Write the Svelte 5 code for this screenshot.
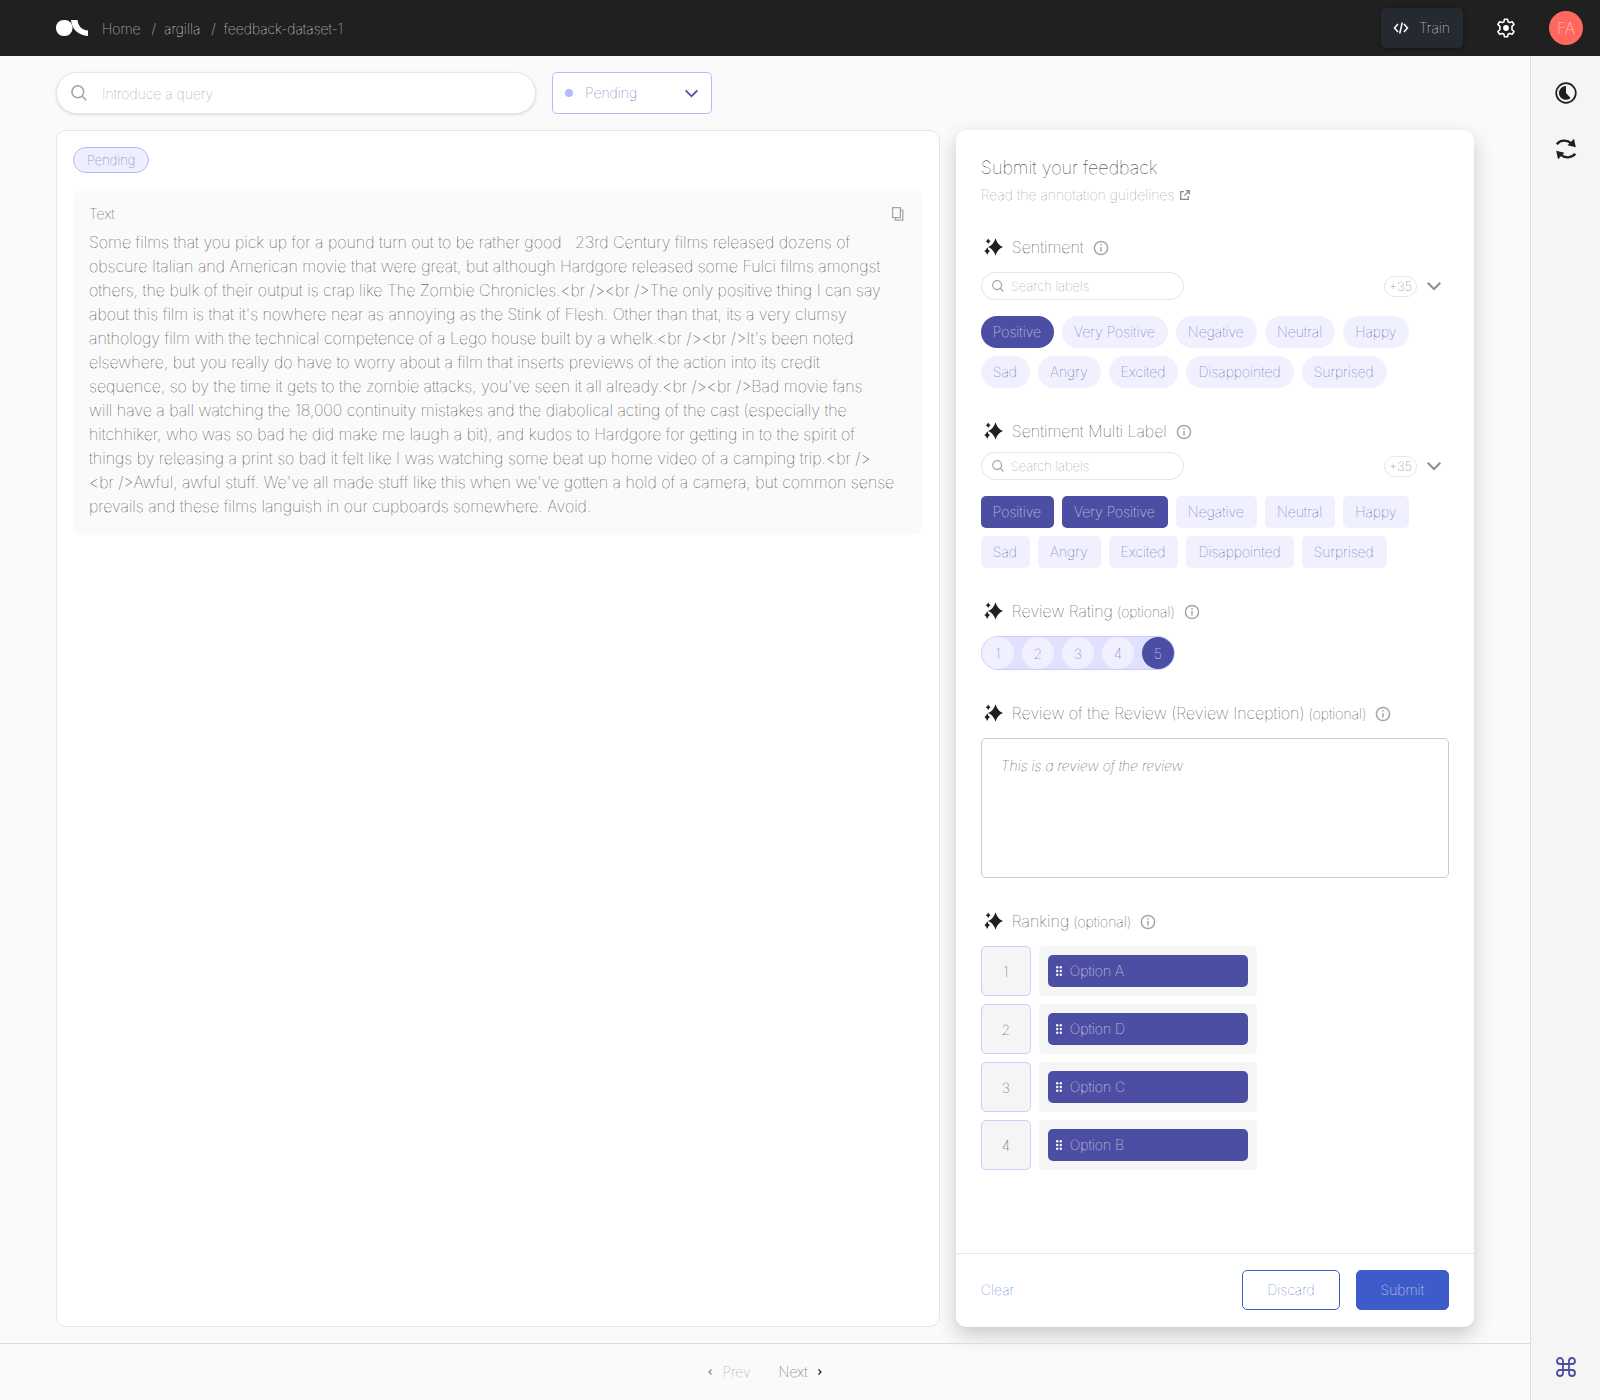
<script>
  const text =
    "Some films that you pick up for a pound turn out to be rather good \u00a0 23rd Century films released dozens of obscure Italian and American movie that were great, but although Hardgore released some Fulci films amongst others, the bulk of their output is crap like The Zombie Chronicles.<br /><br />The only positive thing I can say about this film is that it's nowhere near as annoying as the Stink of Flesh. Other than that, its a very clumsy anthology film with the technical competence of a Lego house built by a whelk.<br /><br />It's been noted elsewhere, but you really do have to worry about a film that inserts previews of the action into its credit\nsequence, so by the time it gets to the zombie attacks, you've seen it all already.<br /><br />Bad movie fans\nwill have a ball watching the 18,000 continuity mistakes and the diabolical acting of the cast (especially the hitchhiker, who was so bad he did make me laugh a bit), and kudos to Hardgore for getting in to the spirit of things by releasing a print so bad it felt like I was watching some beat up home video of a camping trip.<br />\n<br />Awful, awful stuff. We've all made stuff like this when we've gotten a hold of a camera, but common sense prevails and these films languish in our cupboards somewhere. Avoid.";
  const labels = ['Positive', 'Very Positive', 'Negative', 'Neutral', 'Happy', 'Sad', 'Angry', 'Excited', 'Disappointed', 'Surprised'];
  const ranking = ['Option A', 'Option D', 'Option C', 'Option B'];
  let single = $state('Positive');
  let multi = $state(['Positive', 'Very Positive']);
  let rating = $state(5);
  let review = $state('This is a review of the review');
</script>

{#snippet searchIcon(size)}
  <svg width={size} height={size} viewBox="0 0 16 16" fill="none" stroke="#a6a6a6" stroke-width="1.6" aria-hidden="true">
    <circle cx="6.8" cy="6.8" r="5.9" /><path d="M11 11l4.3 4.3" />
  </svg>
{/snippet}

{#snippet chevron(size, color)}
  <svg width={size} height={size} viewBox="0 0 12 12" fill="none" stroke={color} stroke-width="1.7" aria-hidden="true">
    <path d="M.6 3.2L6 8.6l5.4-5.4" />
  </svg>
{/snippet}

{#snippet heading(title, optional)}
  <h3>
    <svg class="spark" width="20" height="18" viewBox="0 0 20 18" fill="#202020" aria-hidden="true">
      <path d="M11.500 .2Q13.500 7 19 9 13.500 11 11.500 17.800 9.500 11 4 9 9.500 7 11.500 .2z" />
      <path d="M4.200 .4Q5 2.500 6.700 3.200 5 3.900 4.200 6 3.400 3.900 1.700 3.200 3.400 2.500 4.200 .4z" />
      <path d="M3.200 9.200Q4.100 12.100 6 13 4.100 13.900 3.200 16.900 2.300 13.900 .3 13 2.300 12.100 3.200 9.200z" />
    </svg>
    <span>{title}{#if optional}<small>(optional)</small>{/if}</span>
    <svg class="info" width="16" height="16" viewBox="0 0 16 16" fill="none" stroke="#a6a6a6" stroke-width="1.5" role="img" aria-label="Info">
      <circle cx="8" cy="8" r="6.6" /><path d="M8 7v4.600M8 4v1.600" />
    </svg>
  </h3>
{/snippet}

{#snippet labelTools(name)}
  <div class="tools">
    <label class="labelsearch">
      {@render searchIcon(12)}
      <input type="text" placeholder="Search labels" aria-label="Search {name} labels" />
    </label>
    <button class="count" type="button">+35</button>
    <button class="more" type="button" aria-label="Show more labels">{@render chevron(14, '#8f8f8f')}</button>
  </div>
{/snippet}

<div class="app">
  <header>
    <a class="logo" href="/" aria-label="Argilla">
      <svg width="32" height="16" viewBox="0 0 32 16" fill="#fff" aria-hidden="true">
        <rect width="16.5" height="16" rx="7.6" />
        <path d="M15 0h6.600c.2 5.700 4.300 9.800 10.400 10.600V16C22.500 15.500 15.600 9 15 0z" />
      </svg>
    </a>
    <nav class="crumbs" aria-label="Breadcrumb">
      <a href="/">Home</a><i>/</i><a href="/argilla">argilla</a><i>/</i><a href="/dataset">feedback-dataset-1</a>
    </nav>
    <button class="train" type="button">
      <svg width="16" height="16" viewBox="0 0 16 16" fill="none" stroke="#fff" stroke-width="1.5" aria-hidden="true">
        <path d="M5 4L1.500 8 5 12M11 4l3.500 4-3.500 4M9.300 2.500L6.700 13.500" />
      </svg>
      Train
    </button>
    <a class="gear" href="/settings" aria-label="Settings">
      <svg width="20" height="20" viewBox="0 0 20 20" fill="none" stroke="#fff" stroke-width="1.6" stroke-linejoin="round" aria-hidden="true">
        <path d="M8.500 1.200h3l.6 2.500 1.500.9 2.700-.8 1.700 2.700-2 1.800v3.400l2 1.800-1.700 2.700-2.700-.8-1.500.9-.6 2.500h-3l-.6-2.500-1.500-.9-2.700.8L1.900 13.500l2-1.800V8.300l-2-1.800 1.700-2.700 2.700.8 1.600-.9z" />
        <circle cx="10" cy="10" r="2.9" fill="#fff" stroke="none" />
      </svg>
    </a>
    <button class="avatar" type="button">FA</button>
  </header>

  <div class="body">
    <div class="content">
      <main>
        <div class="filters">
          <label class="query">
            {@render searchIcon(16)}
            <input type="text" placeholder="Introduce a query" aria-label="Query" />
          </label>
          <label class="status">
            <b></b>
            <select aria-label="Record status">
              <option>Pending</option>
              <option>Submitted</option>
              <option>Discarded</option>
            </select>
            {@render chevron(13, '#4c4ea3')}
          </label>
        </div>
        <div class="panels">
          <section class="record">
            <span class="badge">Pending</span>
            <article>
              <div class="fieldhead">
                <h2>Text</h2>
                <button type="button" aria-label="Copy">
                  <svg width="14" height="16" viewBox="0 0 14 16" fill="none" stroke="#a6a6a6" stroke-width="1.3" aria-hidden="true">
                    <path d="M1.600 1.600h7.800v10H1.600z" /><path d="M9.400 4.400h2.400v9.800H4.400v-2.600" />
                  </svg>
                </button>
              </div>
              <p>{text}</p>
            </article>
          </section>

          <form class="feedback" onsubmit={(e) => e.preventDefault()}>
            <div class="questions">
              <div class="intro">
                <h2>Submit your feedback</h2>
                <a href="/guidelines">Read the annotation guidelines
                  <svg width="10" height="10" viewBox="0 0 10 10" fill="none" stroke="#8a8a8a" stroke-width="1.3" aria-hidden="true">
                    <path d="M4 1.700H.7v7.600h7.600V6M5.600.7h3.700v3.700M9.300.7L4.400 5.600" />
                  </svg>
                </a>
              </div>

              <div class="question roomy">
                {@render heading('Sentiment', false)}
                {@render labelTools('sentiment')}
                <div class="chips round">
                  {#each labels as l}
                    <label class:on={single === l}><input type="radio" name="sentiment" value={l} bind:group={single} />{l}</label>
                  {/each}
                </div>
              </div>

              <div class="question">
                {@render heading('Sentiment Multi Label', false)}
                {@render labelTools('multi')}
                <div class="chips">
                  {#each labels as l}
                    <label class:on={multi.includes(l)}><input type="checkbox" value={l} bind:group={multi} />{l}</label>
                  {/each}
                </div>
              </div>

              <div class="question roomy">
                {@render heading('Review Rating', true)}
                <div class="rating">
                  {#each [1, 2, 3, 4, 5] as n}
                    <label class:on={rating === n}><input type="radio" name="rating" value={n} bind:group={rating} />{n}</label>
                  {/each}
                </div>
              </div>

              <div class="question roomy">
                {@render heading('Review of the Review (Review Inception)', true)}
                <textarea aria-label="Review of the Review" bind:value={review}></textarea>
              </div>

              <div class="question roomy">
                {@render heading('Ranking', true)}
                <ol>
                  {#each ranking as option, i}
                    <li>
                      <span class="rank">{i + 1}</span>
                      <div class="slot">
                        <button type="button">
                          <svg width="6" height="10" viewBox="0 0 6 10" fill="#fff" aria-hidden="true">
                            <circle cx="1.2" cy="1.2" r="1.2" /><circle cx="4.8" cy="1.2" r="1.2" />
                            <circle cx="1.2" cy="5" r="1.2" /><circle cx="4.8" cy="5" r="1.2" />
                            <circle cx="1.2" cy="8.8" r="1.2" /><circle cx="4.8" cy="8.8" r="1.2" />
                          </svg>
                          {option}
                        </button>
                      </div>
                    </li>
                  {/each}
                </ol>
              </div>
            </div>
            <div class="actions">
              <button class="clear" type="button">Clear</button>
              <button class="discard" type="button">Discard</button>
              <button class="submit" type="submit">Submit</button>
            </div>
          </form>
        </div>
      </main>
      <footer>
        <button class="prev" type="button">
          <svg width="4" height="6" viewBox="0 0 4 6" fill="none" stroke="#8a8a8a" stroke-width="1.2" aria-hidden="true"><path d="M3.500.5L1 3l2.500 2.500" /></svg>
          Prev
        </button>
        <button type="button">
          Next
          <svg width="4" height="6" viewBox="0 0 4 6" fill="none" stroke="#202020" stroke-width="1.2" aria-hidden="true"><path d="M.5.5L3 3 .5 5.500" /></svg>
        </button>
      </footer>
    </div>

    <aside>
      <button type="button" aria-label="Progress">
        <svg width="22" height="22" viewBox="0 0 22 22" aria-hidden="true">
          <circle cx="11" cy="11" r="9.8" fill="none" stroke="#202020" stroke-width="1.7" />
          <path d="M11 4v7l4.600 4.900A6.900 6.900 0 1 1 11 4z" fill="#202020" />
        </svg>
      </button>
      <button type="button" aria-label="Refresh">
        <svg width="22" height="22" viewBox="0 0 22 22" fill="none" stroke="#202020" stroke-width="2.4" aria-hidden="true">
          <path d="M1.800 6.200C5.500 1.800 12 1.400 16.600 5.600M20.200 15.800C16.500 20.200 10 20.600 5.400 16.400" />
          <path d="M19 .8L20.800 9.300 12.600 7.200zM3 21.200L1.200 12.700l8.200 2.100z" fill="#202020" stroke="none" />
        </svg>
      </button>
      <button class="keys" type="button" aria-label="Shortcuts">
        <svg width="20" height="20" viewBox="0 0 20 20" fill="none" stroke="#4c4ea3" stroke-width="1.8" aria-hidden="true">
          <path d="M7 7V4a3 3 0 1 0-3 3h12a3 3 0 1 0-3-3v12a3 3 0 1 0 3-3H4a3 3 0 1 0 3 3z" />
        </svg>
      </button>
    </aside>
  </div>
</div>

<style>
  :global(body) { margin: 0; }
  .app {
    display: flex;
    flex-direction: column;
    min-height: 100vh;
    font: 100 14px/20px Inter, 'Liberation Sans', sans-serif;
    color: #202020;
    background: #fafafa;
  }
  .app :global(*) { box-sizing: border-box; }
  svg { display: block; flex: none; }
  button, input, textarea, select { font: inherit; color: inherit; border: 0; background: none; padding: 0; margin: 0; }
  a { color: inherit; text-decoration: none; }
  h2, h3, p, ol { margin: 0; padding: 0; font-weight: 100; }

  header { display: flex; align-items: center; height: 56px; padding: 0 17px 0 56px; background: #202020; color: #fff; }
  .crumbs { display: flex; margin: 2px auto 0 14px; }
  .crumbs i { font-style: normal; margin: 0 8px 0 11px; }
  .train { display: flex; align-items: center; gap: 10px; width: 82px; height: 40px; padding-left: 12px; border-radius: 5px; background: #252a30; box-shadow: 0 1px 4px #0006; color: #fff; }
  .gear { margin: 0 33px; }
  .avatar { width: 34px; height: 34px; border-radius: 50%; background: #ff675f; font-size: 16px; }

  .body { display: flex; flex: 1; }
  .content { display: flex; flex-direction: column; flex: 1; min-width: 0; }
  main { display: flex; flex-direction: column; flex: 1; gap: 16px; padding: 16px 56px; }
  .filters { display: flex; gap: 16px; }
  .query { display: flex; align-items: center; gap: 15px; width: 480px; height: 42px; padding: 0 14px; border: 1px solid #e6e6e6; border-radius: 21px; background: #fff; box-shadow: 0 1px 3px #0002; }
  .query input { flex: 1; min-width: 0; outline: 0; padding-top: 2px; }
  input::placeholder { color: #8a8a8a; opacity: 1; }
  .status { display: flex; align-items: center; width: 160px; height: 42px; padding: 0 13px 0 12px; border: 1px solid #b6b9ff; border-radius: 5px; background: #fff; color: #4c4ea3; }
  .status b { width: 8px; height: 8px; border-radius: 50%; background: #b6b9ff; }
  .status select { flex: 1; min-width: 0; margin-left: 12px; appearance: none; outline: 0; }

  .panels { display: grid; grid-template-columns: minmax(0, 29fr) minmax(0, 17fr); gap: 16px; flex: 1; }
  .record { padding: 16px; border: 1px solid #e6e6e6; border-radius: 10px; background: #fff; }
  .badge { display: block; width: max-content; padding: 3px 13px; border: 1px solid #b6b9ff; border-radius: 13px; background: #eeeeff; color: #4c4ea3; font-size: 13px; line-height: 18px; }
  article { margin-top: 16px; padding: 16px 16px 17px; border-radius: 10px; background: #fafafa; }
  .fieldhead { display: flex; justify-content: space-between; align-items: center; height: 18px; margin-bottom: 7px; padding-right: 2px; }
  .fieldhead h2 { font-size: 14px; }
  article p { padding-right: 8px; font-size: 16px; line-height: 24px; white-space: pre-line; }

  .feedback { display: flex; flex-direction: column; border-radius: 10px; background: #fff; box-shadow: 0 8px 20px 0 #0003; }
  .questions { display: flex; flex-direction: column; flex: 1; gap: 33px; padding: 25px; }
  .intro h2 { font-size: 18px; line-height: 26px; }
  .intro a { display: flex; align-items: center; gap: 6px; margin-top: 5px; color: #8a8a8a; line-height: 18px; }
  h3 { display: flex; align-items: center; height: 20px; font-size: 16px; }
  h3 .spark { margin: 0 8px 0 3px; }
  h3 small { margin-left: 4px; font-size: 14px; }
  h3 .info { margin: 2px 0 0 9px; }
  .question { display: flex; flex-direction: column; gap: 11px; }
  .question.roomy { gap: 15px; }
  .tools { display: flex; align-items: center; margin-bottom: 5px; padding-right: 8px; }
  .roomy .tools { margin-bottom: 1px; }
  .labelsearch { display: flex; align-items: center; gap: 7px; width: 203px; height: 28px; padding: 0 10px; margin-right: auto; border: 1px solid #e6e6e6; border-radius: 14px; font-size: 13px; }
  .labelsearch input { flex: 1; min-width: 0; outline: 0; }
  .count { height: 21px; padding: 0 4px; border: 1px solid #e6e6e6; border-radius: 11px; font-size: 13px; line-height: 19px; color: #4d4d4d; }
  .more { margin-left: 10px; }
  .chips { display: flex; flex-wrap: wrap; gap: 8px; max-width: 440px; }
  .chips label { height: 32px; padding: 0 13px 0 12px; border-radius: 5px; background: #f0f0ff; color: #4c4ea3; line-height: 32px; }
  .chips.round label { border-radius: 16px; }
  .chips input, .rating input { position: absolute; opacity: 0; pointer-events: none; }
  .chips label.on, .rating label.on { background: #4c4ea3; color: #fff; }
  .rating { display: flex; gap: 8px; width: max-content; border: 1px solid #cdcdff; border-radius: 17px; background: #e0e1ff; }
  .rating label { width: 32px; height: 32px; border-radius: 50%; background: #f0f0ff; color: #4c4ea3; line-height: 34px; text-align: center; }
  textarea { display: block; width: 100%; height: 140px; padding: 17px 19px; border: 1px solid #ccc; border-radius: 5px; resize: none; font-style: italic; outline: 0; }
  ol { display: flex; flex-direction: column; gap: 8px; list-style: none; }
  li { display: flex; gap: 8px; }
  .rank { width: 50px; height: 50px; border: 1px solid #cdcdff; border-radius: 5px; background: #f5f5f5; line-height: 50px; text-align: center; }
  .slot { padding: 9px; border-radius: 5px; background: #f5f5f5; }
  .slot button { display: flex; align-items: center; gap: 8px; width: 200px; height: 32px; padding: 0 8px; border-radius: 5px; background: #4c4ea3; color: #fff; }
  .actions { display: flex; align-items: center; gap: 16px; height: 74px; padding: 0 25px 2px; border-top: 1px solid #e6e6e6; }
  .clear { margin-right: auto; color: #3e5cc9; }
  .discard, .submit { height: 40px; padding: 0 24px; border: 1px solid #3e5cc9; border-radius: 5px; color: #3e5cc9; }
  .submit { background: #3e5cc9; color: #fff; }

  footer { display: flex; align-items: center; justify-content: center; gap: 28px; height: 57px; border-top: 1px solid #dcdcdc; }
  footer button { display: flex; align-items: center; gap: 10px; }
  .prev { color: #8a8a8a; }
  aside { display: flex; flex-direction: column; align-items: center; gap: 34px; width: 70px; padding: 26px 0 23px; border-left: 1px solid #dcdcdc; background: #f5f5f5; }
  .keys { margin-top: auto; }
</style>
